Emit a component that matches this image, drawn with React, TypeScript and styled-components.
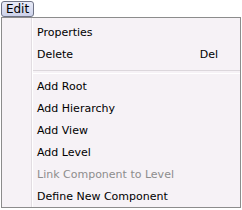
import React from 'react';
import styled, { createGlobalStyle } from 'styled-components';

const GlobalStyle = createGlobalStyle`
  html, body {
    margin: 0;
    padding: 0;
    background: #ffffff;
  }
  body {
    font-family: "DejaVu Sans", "Liberation Sans", sans-serif;
    font-size: 11px;
    color: #000;
  }
`;

const Page = styled.div`
  width: 242px;
  height: 210px;
  padding: 1px 0 0 1px;
  box-sizing: border-box;
`;

const MenuButton = styled.div`
  display: inline-flex;
  align-items: center;
  justify-content: center;
  box-sizing: border-box;
  width: 33px;
  height: 16px;
  border: 1px solid #6e7386;
  border-radius: 3px;
  background: linear-gradient(#e9ecf8, #cdd2ea);
  font-size: 12px;
  color: #000;
`;

const Menu = styled.div`
  box-sizing: border-box;
  width: 240px;
  height: 191px;
  border: 1px solid #8c8c8c;
  background: #f6f2f6;
  display: flex;
  flex-direction: column;
  padding: 4px 0 0;
  position: relative;
  &:before {
    content: '';
    position: absolute;
    top: 0;
    bottom: 0;
    left: 29px;
    width: 1px;
    background: #e2dde2;
  }
  &:after {
    content: '';
    position: absolute;
    top: 0;
    bottom: 0;
    left: 30px;
    width: 1px;
    background: #ffffff;
  }
`;

const Item = styled.div<{ $disabled?: boolean }>`
  display: flex;
  align-items: center;
  justify-content: space-between;
  height: 22px;
  padding: 0 22px 0 35px;
  color: ${p => (p.$disabled ? '#8d8d8d' : '#000')};
`;

const Separator = styled.div`
  margin: 4px 0 2px 31px;
  height: 2px;
  border-top: 1px solid #dcd7dc;
  border-bottom: 1px solid #ffffff;
`;

const App = () => (
  <Page>
    <GlobalStyle />
    <MenuButton>Edit</MenuButton>
    <Menu>
      <Item>Properties</Item>
      <Item>
        <span>Delete</span>
        <span>Del</span>
      </Item>
      <Separator />
      <Item>Add Root</Item>
      <Item>Add Hierarchy</Item>
      <Item>Add View</Item>
      <Item>Add Level</Item>
      <Item $disabled>Link Component to Level</Item>
      <Item>Define New Component</Item>
    </Menu>
  </Page>
);

export default App;
